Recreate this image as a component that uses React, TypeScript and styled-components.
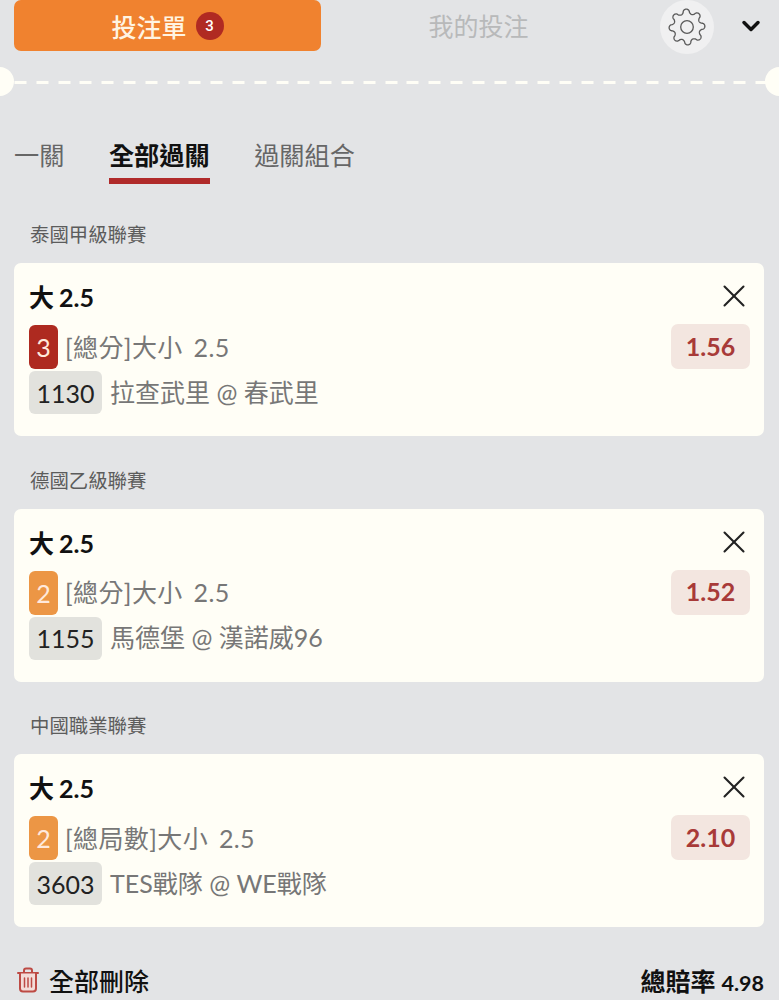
import React from 'react';
import styled, { createGlobalStyle } from 'styled-components';
import { ChevronDown, X } from 'lucide-react';

type Bet = {
  league: string;
  level: number;
  market: string;
  code: string;
  teams: string;
  odds: string;
};

const bets: Bet[] = [
  { league: '泰國甲級聯賽', level: 3, market: '[總分]大小 2.5', code: '1130', teams: '拉查武里 @ 春武里', odds: '1.56' },
  { league: '德國乙級聯賽', level: 2, market: '[總分]大小 2.5', code: '1155', teams: '馬德堡 @ 漢諾威96', odds: '1.52' },
  { league: '中國職業聯賽', level: 2, market: '[總局數]大小 2.5', code: '3603', teams: 'TES戰隊 @ WE戰隊', odds: '2.10' },
];

// eight soft teeth, traced around the centre of the icon
const gearOutline = () => {
  const points: string[] = [];
  for (let i = 0; i < 240; i++) {
    const angle = (i / 240) * Math.PI * 2;
    const wave = Math.cos(angle * 8 + Math.PI / 8);
    const radius = 15.6 + 2.3 * Math.sign(wave) * Math.pow(Math.abs(wave), 0.6);
    points.push(`${(20 + radius * Math.cos(angle)).toFixed(2)},${(20 + radius * Math.sin(angle)).toFixed(2)}`);
  }
  return `M${points.join('L')}Z`;
};

const GearIcon = () => (
  <svg width='40' height='40' viewBox='0 0 40 40' fill='none' stroke='#5a5a5a' strokeWidth='1.3' strokeLinejoin='round'>
    <path d={gearOutline()} />
    <circle cx='20' cy='20' r='6.300' />
  </svg>
);

const TrashIcon = () => (
  <svg width='24' height='26' viewBox='0 0 24 26' fill='none' stroke='#bd4a44' strokeWidth='2' strokeLinejoin='round' strokeLinecap='round'>
    <path d='M8 5V3.5C8 2.4 8.9 1.5 10 1.5h4c1.100 0 2 .9 2 2V5' />
    <path d='M2 6h20' />
    <path d='M4 6.500v15c0 1.700 1.300 3 3 3h10c1.700 0 3-1.300 3-3v-15' fill='#f3dcd8' />
    <path d='M8.500 11v9M12 11v9M15.500 11v9' strokeWidth='1.500' />
  </svg>
);

function App() {
  return (
    <Page>
      <GlobalStyle />
      <Header>
        <ActiveTab>
          投注單 <CountBadge>3</CountBadge>
        </ActiveTab>
        <MyBets>我的投注</MyBets>
        <GearButton>
          <GearIcon />
        </GearButton>
        <Collapse>
          <ChevronDown size={28} strokeWidth={3} color='#111' />
        </Collapse>
      </Header>

      <Ticket>
        <Notch $side='left' />
        <Dash />
        <Notch $side='right' />
      </Ticket>

      <Tabs>
        <Tab>一關</Tab>
        <Tab $active>全部過關</Tab>
        <Tab>過關組合</Tab>
      </Tabs>

      {bets.map((bet) => (
        <Section key={bet.code}>
          <League>{bet.league}</League>
          <Card>
            <CardTop>
              <Pick>大 2.5</Pick>
              <CloseIcon>
                <X size={38} strokeWidth={1.3} color='#222' />
              </CloseIcon>
            </CardTop>
            <MarketRow>
              <Level $level={bet.level}>{bet.level}</Level>
              <Market>{bet.market}</Market>
              <Odds>{bet.odds}</Odds>
            </MarketRow>
            <MatchRow>
              <Code>{bet.code}</Code>
              <Teams>{bet.teams}</Teams>
            </MatchRow>
          </Card>
        </Section>
      ))}

      <Footer>
        <DeleteAll>
          <TrashIcon />
          全部刪除
        </DeleteAll>
        <Total>
          總賠率 <TotalValue>4.98</TotalValue>
        </Total>
      </Footer>
    </Page>
  );
}

export default App;

const GlobalStyle = createGlobalStyle`
  html, body {
    margin: 0;
    padding: 0;
    background: #e3e4e6;
  }
`;

const Page = styled.div`
  width: 779px;
  height: 1000px;
  overflow: hidden;
  box-sizing: border-box;
  background: #e3e4e6;
  font-family: Lato, 'Noto Sans CJK TC', sans-serif;
`;

const Header = styled.div`
  display: flex;
  align-items: flex-start;
  height: 52px;
  padding-left: 14px;
`;

const ActiveTab = styled.div`
  width: 307px;
  height: 51px;
  background: #f0822f;
  border-radius: 7px;
  color: #fff4e2;
  font-size: 25px;
  font-weight: 500;
  display: flex;
  justify-content: center;
  align-items: center;
  gap: 9px;
`;

const CountBadge = styled.span`
  width: 28px;
  height: 28px;
  border-radius: 50%;
  background: #b02a22;
  color: #fff;
  font-family: Roboto, sans-serif;
  font-size: 15px;
  display: flex;
  justify-content: center;
  align-items: center;
`;

const MyBets = styled.div`
  width: 315px;
  height: 52px;
  line-height: 52px;
  text-align: center;
  color: #b8b9ba;
  font-size: 25px;
`;

const GearButton = styled.div`
  width: 54px;
  height: 54px;
  margin-left: 24px;
  border-radius: 50%;
  background: #f0f0f1;
  display: flex;
  justify-content: center;
  align-items: center;
`;

const Collapse = styled.div`
  width: 28px;
  height: 28px;
  margin: 12px 0 0 23px;
`;

const Ticket = styled.div`
  position: relative;
  height: 60px;
  display: flex;
  align-items: center;
`;

const Dash = styled.div`
  flex: 1;
  height: 3px;
  background: repeating-linear-gradient(90deg, #fffef6 0 12px, transparent 12px 21.8px);
  background-position: 14.5px 0;
`;

const Notch = styled.div<{ $side: 'left' | 'right' }>`
  position: absolute;
  top: 15px;
  ${(p) => p.$side}: -15px;
  width: 29px;
  height: 29px;
  border-radius: 50%;
  background: #fffef6;
`;

const Tabs = styled.div`
  display: flex;
  gap: 44.5px;
  padding-left: 14px;
  height: 71px;
  margin: 1px 0 36px;
`;

const Tab = styled.div<{ $active?: boolean }>`
  box-sizing: border-box;
  height: 71px;
  padding-top: 19px;
  line-height: 46px;
  font-size: 25.2px;
  color: ${(p) => (p.$active ? '#111' : '#666')};
  font-weight: ${(p) => (p.$active ? 700 : 400)};
  border-bottom: ${(p) => (p.$active ? '6px solid #b02a2a' : 'none')};
`;

const Section = styled.div`
  padding: 0 15px 0 14px;
  margin-bottom: 29.5px;
`;

const League = styled.div`
  height: 43px;
  padding-left: 16px;
  font-size: 19.4px;
  line-height: 30px;
  color: #5c5c5c;
`;

const Card = styled.div`
  height: 173px;
  box-sizing: border-box;
  background: #fffef6;
  border-radius: 7px;
  padding: 14px 14px 0 15px;
`;

const CardTop = styled.div`
  display: flex;
  justify-content: space-between;
  align-items: center;
  height: 38px;
`;

const CloseIcon = styled.div`
  display: flex;
  margin-right: -3px;
`;

const Pick = styled.div`
  font-size: 25px;
  font-weight: 700;
  word-spacing: -1px;
  color: #111;
`;

const MarketRow = styled.div`
  display: flex;
  align-items: center;
  height: 44px;
  margin-top: 10px;
`;

const Level = styled.div<{ $level: number }>`
  width: 29px;
  height: 44px;
  border-radius: 6px;
  background: ${(p) => (p.$level === 3 ? '#ae2a20' : '#ec9645')};
  color: #ffe9dc;
  font-size: 25px;
  display: flex;
  justify-content: center;
  align-items: center;
`;

const Market = styled.div`
  flex: 1;
  margin-left: 7px;
  padding-bottom: 3px;
  font-size: 25px;
  letter-spacing: 0.4px;
  word-spacing: 4px;
  color: #777;
`;

const Odds = styled.div`
  width: 79px;
  height: 45px;
  box-sizing: border-box;
  margin-top: -1px;
  padding-bottom: 2px;
  border-radius: 7px;
  background: #f3e6e0;
  color: #a83a38;
  font-size: 25px;
  font-weight: 700;
  display: flex;
  justify-content: center;
  align-items: center;
`;

const MatchRow = styled.div`
  display: flex;
  align-items: center;
  height: 43px;
  margin-top: 2px;
`;

const Code = styled.div`
  width: 73px;
  height: 43px;
  border-radius: 6px;
  background: #e2e2dd;
  color: #222;
  font-size: 25px;
  display: flex;
  justify-content: center;
  align-items: center;
`;

const Teams = styled.div`
  margin-left: 8px;
  padding-bottom: 4px;
  font-size: 25px;
  color: #777;
`;

const Footer = styled.div`
  display: flex;
  justify-content: space-between;
  align-items: center;
  padding: 3px 15px 0 16px;
  height: 40px;
`;

const DeleteAll = styled.div`
  display: flex;
  align-items: center;
  gap: 9px;
  font-size: 25px;
  font-weight: 500;
  color: #111;
`;

const Total = styled.div`
  font-size: 25px;
  font-weight: 700;
  color: #111;
`;

const TotalValue = styled.span`
  font-size: 21.5px;
`;
